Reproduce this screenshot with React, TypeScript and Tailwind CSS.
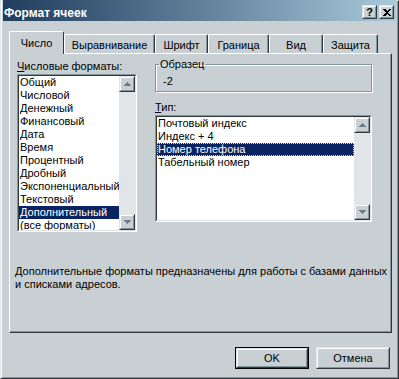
import React from 'react';

const formats = [
  'Общий',
  'Числовой',
  'Денежный',
  'Финансовый',
  'Дата',
  'Время',
  'Процентный',
  'Дробный',
  'Экспоненциальный',
  'Текстовый',
  'Дополнительный',
  '(все форматы)',
];

const types = ['Почтовый индекс', 'Индекс + 4', 'Номер телефона', 'Табельный номер'];

const tabs = [
  { label: 'Число', w: 'w-[55px]' },
  { label: 'Выравнивание', w: 'w-[91px]' },
  { label: 'Шрифт', w: 'w-[53px]' },
  { label: 'Граница', w: 'w-[61px]' },
  { label: 'Вид', w: 'w-[54px]' },
  { label: 'Защита', w: 'w-[55px]' },
];

function Raised({ className = '', children }: { className?: string; children?: React.ReactNode }) {
  return (
    <div className={`shrink-0 border border-t-[#dfe4e7] border-l-[#dfe4e7] border-r-[#2f393e] border-b-[#2f393e] ${className}`}>
      <div className="w-full h-full flex items-center justify-center bg-[#c8d0d4] border border-t-white border-l-white border-r-[#85939b] border-b-[#85939b]">
        {children}
      </div>
    </div>
  );
}

function Arrow({ up }: { up?: boolean }) {
  return (
    <svg width="7" height="4" viewBox="0 0 7 4" shapeRendering="crispEdges">
      <path
        d={up ? 'M3 0h1v1h1v1h1v1h1v1H0V3h1V2h1V1h1z' : 'M0 0h7v1H6v1H5v1H4v1H3V3H2V2H1V1H0z'}
        fill="#6b7c88"
      />
    </svg>
  );
}

function ScrollBar() {
  return (
    <div className="flex flex-col w-[16px] h-full bg-[#e1e5e8] shrink-0">
      <Raised className="w-[16px] h-[16px]">
        <Arrow up />
      </Raised>
      <div className="flex-1" />
      <Raised className="w-[16px] h-[16px]">
        <Arrow />
      </Raised>
    </div>
  );
}

function ListBox({
  items,
  selected,
  focus,
  className = '',
}: {
  items: string[];
  selected: number;
  focus?: boolean;
  className?: string;
}) {
  return (
    <div className={`border border-t-[#85939b] border-l-[#85939b] border-r-white border-b-white ${className}`}>
      <div className="flex h-full border border-t-[#2f393e] border-l-[#2f393e] border-r-[#dfe4e7] border-b-[#dfe4e7]">
        <div className="flex-1 bg-white overflow-hidden">
          {items.map((t, i) => (
            <div
              key={t}
              className={`h-[13px] leading-[13px] pl-[1px] whitespace-nowrap ${
                i === selected ? 'bg-[#0a2463] text-white' : 'text-black'
              } ${i === selected && focus ? 'outline-1 outline-dotted outline-[#f2d98f] -outline-offset-1' : ''}`}
            >
              {t}
            </div>
          ))}
        </div>
        <ScrollBar />
      </div>
    </div>
  );
}

export default function App() {
  return (
    <div className="w-[399px] h-[379px] flex flex-col bg-[#c8d0d4] text-[11px] text-black font-['Liberation_Sans',Arial,sans-serif] border border-l-[#dfe4e7] border-t-[#dfe4e7] border-r-[#2f393e] border-b-[#2f393e] shadow-[inset_1px_0_0_white,inset_-1px_-1px_0_#85939b]">
      {/* заголовок */}
      <div className="h-[21px] mx-[2px] -mt-px flex justify-between bg-gradient-to-r from-[#1f3d5d] to-[#a9cadb]">
        <div className="pl-[1px] pt-[6px] leading-[14px] text-[12px] font-bold text-white">Формат ячеек</div>
        <div className="flex gap-[2px] mt-[5px] mr-[2px]">
          <Raised className="w-[15px] h-[14px]">
            <span className="font-bold text-[11px] leading-none">?</span>
          </Raised>
          <Raised className="w-[15px] h-[14px]">
            <svg width="8" height="7" viewBox="0 0 8 7" shapeRendering="crispEdges">
              <path d="M0 0h2l2 2 2-2h2L5 3.5 8 7H6L4 5 2 7H0l3-3.5z" fill="#000" />
            </svg>
          </Raised>
        </div>
      </div>

      {/* вкладки */}
      <div className="flex items-end h-[22px] mt-[10px] ml-[8px]">
        {tabs.map((t, i) =>
          i === 0 ? (
            <div
              key={t.label}
              className={`relative z-10 ${t.w} h-[23px] -mb-px bg-[#c8d0d4] border-l border-t border-r border-l-white border-t-white border-r-[#2f393e] rounded-t-[2px] flex justify-center pt-[5px] leading-[13px]`}
            >
              {t.label}
            </div>
          ) : (
            <div
              key={t.label}
              className={`${t.w} h-[19px] border-l border-t border-r border-l-white border-t-white border-r-[#2f393e] rounded-t-[2px] flex justify-center pt-[4px] leading-[13px] shadow-[inset_-1px_0_0_#85939b]`}
            >
              {t.label}
            </div>
          )
        )}
      </div>

      {/* панель */}
      <div className="w-[383px] h-[280px] ml-[8px] flex flex-col border border-l-white border-t-white border-r-[#2f393e] border-b-[#2f393e] shadow-[inset_-1px_-1px_0_#85939b]">
        <div className="flex">
          <div className="ml-[7px] mt-[6px] w-[120px]">
            <div className="h-[13px] leading-[13px] mb-[1px]">
              <span className="underline">Ч</span>исловые форматы:
            </div>
            <ListBox items={formats} selected={10} className="w-[120px] h-[158px]" />
          </div>

          <div className="ml-[18px] mt-[4px] w-[217px]">
            <fieldset className="w-[217px] border border-[#85939b] shadow-[1px_1px_0_white,inset_1px_1px_0_white]">
              <legend className="ml-[3px] px-[1px] leading-[12px]">Образец</legend>
              <div className="pl-[7px] pt-[5px] pb-[3px] leading-[13px]">-2</div>
            </fieldset>
            <div className="h-[13px] leading-[13px] mt-[9px] mb-[1px]">
              <span className="underline">Т</span>ип:
            </div>
            <ListBox items={types} selected={2} focus className="w-[217px] h-[107px]" />
          </div>
        </div>

        <div className="pl-[5px] mt-[33px] leading-[13px] whitespace-nowrap">
          Дополнительные форматы предназначены для работы с базами данных
          <br />
          и списками адресов.
        </div>
      </div>

      {/* кнопки */}
      <div className="flex gap-[7px] ml-[234px] mt-[14px]">
        <div className="border border-black">
          <Raised className="w-[72px] h-[20px]">OK</Raised>
        </div>
        <Raised className="w-[74px] h-[22px]">Отмена</Raised>
      </div>
    </div>
  );
}
